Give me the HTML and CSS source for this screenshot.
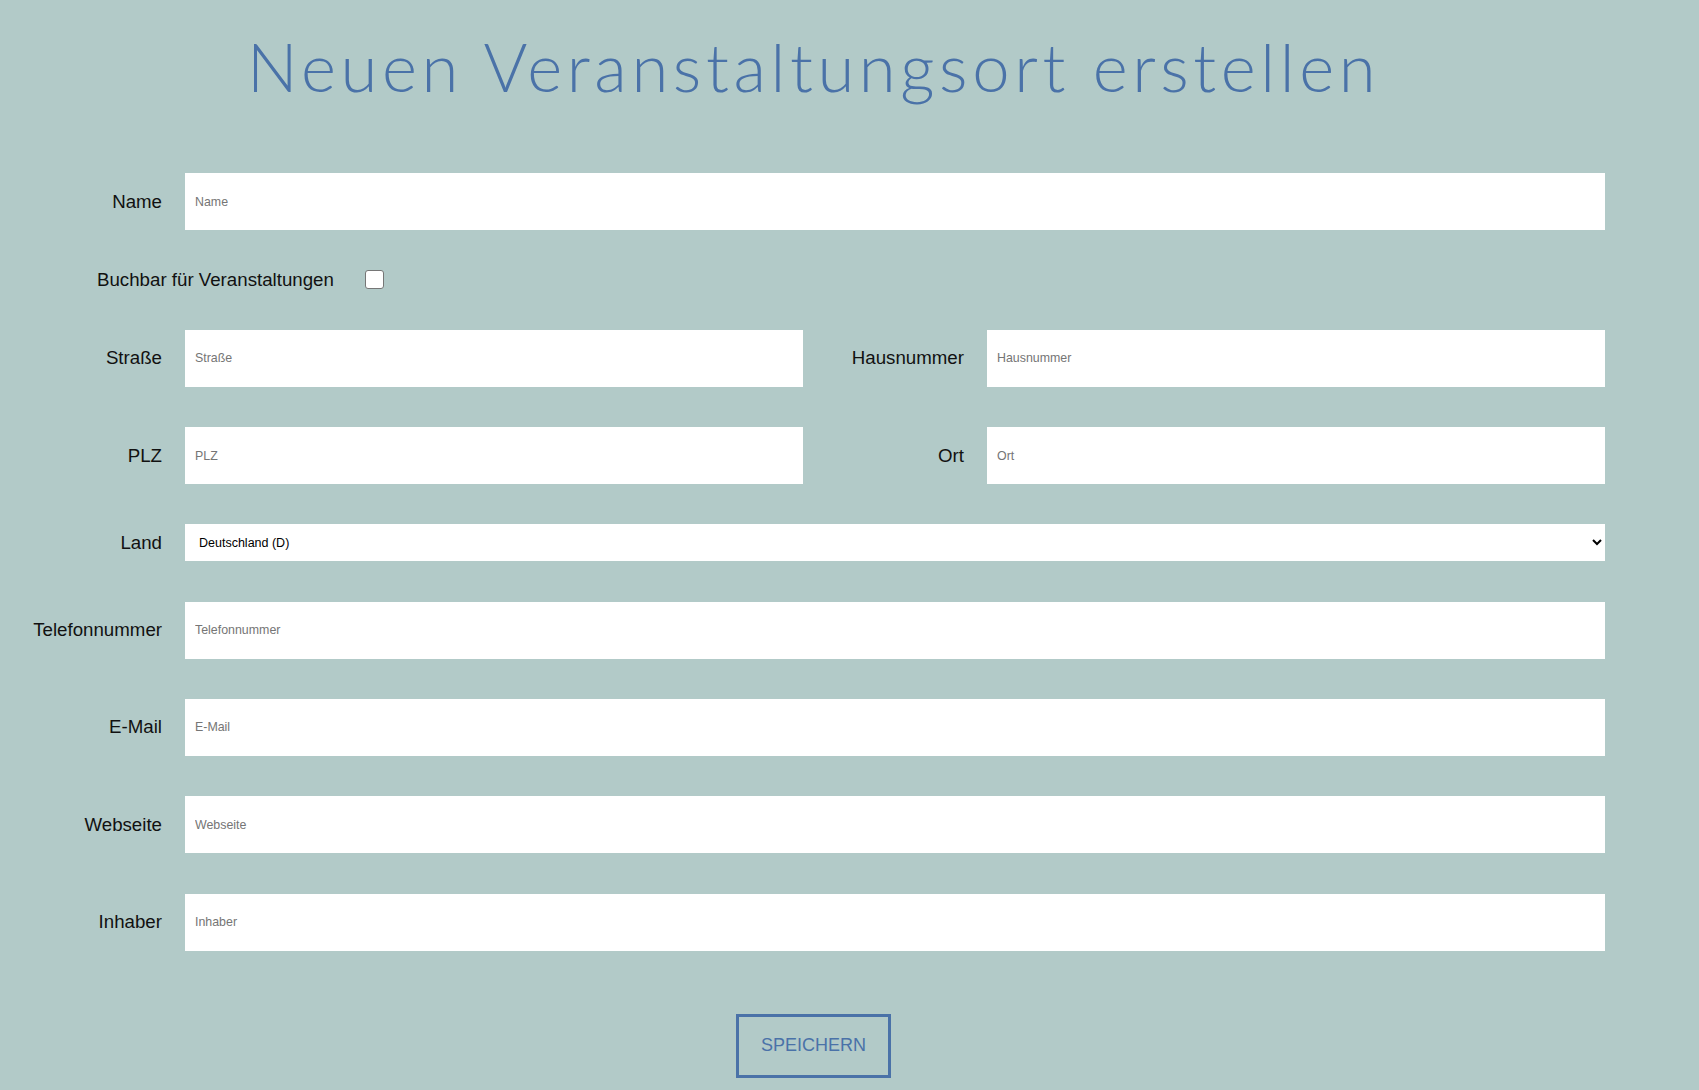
FILE: index.html
```html
<!DOCTYPE html>
<html lang="de">
<head>
<meta charset="utf-8">
<title>Neuen Veranstaltungsort erstellen</title>
<link rel="stylesheet" href="styles.css">
</head>
<body>
<div class="page">
  <h1 class="title">Neuen Veranstaltungsort erstellen</h1>
  <form class="form">
    <div class="row">
      <label class="label" for="name">Name</label>
      <input class="field full" id="name" type="text" placeholder="Name">
    </div>
    <div class="check-row">
      <label class="check-label" for="buchbar">Buchbar für Veranstaltungen</label>
      <input class="check" id="buchbar" type="checkbox">
    </div>
    <div class="row">
      <label class="label" for="strasse">Straße</label>
      <input class="field" id="strasse" type="text" placeholder="Straße">
      <label class="label" for="hausnummer">Hausnummer</label>
      <input class="field" id="hausnummer" type="text" placeholder="Hausnummer">
    </div>
    <div class="row">
      <label class="label" for="plz">PLZ</label>
      <input class="field" id="plz" type="text" placeholder="PLZ">
      <label class="label" for="ort">Ort</label>
      <input class="field" id="ort" type="text" placeholder="Ort">
    </div>
    <div class="row">
      <label class="label" for="land">Land</label>
      <select class="select full" id="land">
        <option>Deutschland (D)</option>
      </select>
    </div>
    <div class="row">
      <label class="label" for="tel">Telefonnummer</label>
      <input class="field full" id="tel" type="text" placeholder="Telefonnummer">
    </div>
    <div class="row">
      <label class="label" for="email">E-Mail</label>
      <input class="field full" id="email" type="text" placeholder="E-Mail">
    </div>
    <div class="row">
      <label class="label" for="web">Webseite</label>
      <input class="field full" id="web" type="text" placeholder="Webseite">
    </div>
    <div class="row">
      <label class="label" for="inhaber">Inhaber</label>
      <input class="field full" id="inhaber" type="text" placeholder="Inhaber">
    </div>
    <div class="actions">
      <button class="save" type="button">SPEICHERN</button>
    </div>
  </form>
</div>
</body>
</html>
```

FILE: styles.css
```css
html, body {
  margin: 0;
  padding: 0;
  background: #b2cac8;
}

body {
  font-family: "Liberation Sans", Arial, sans-serif;
  height: 1090px;
  overflow: hidden;
}

.page {
  width: 1583px;
  padding-left: 22px;
}

.title {
  margin: 0;
  padding-top: 26px;
  height: 173px;
  box-sizing: border-box;
  text-align: center;
  font-family: Lato, "Open Sans", sans-serif;
  font-weight: 300;
  font-size: 67px;
  line-height: 80px;
  color: #4a72a8;
  letter-spacing: 4.6px;
}

.form {
  display: block;
}

.row {
  display: grid;
  grid-template-columns: 140px 618px 138px 618px;
  column-gap: 23px;
  align-items: center;
  margin-bottom: 40.3px;
}

.label {
  text-align: right;
  font-size: 18.7px;
  color: #111;
  white-space: nowrap;
}

.field {
  height: 57px;
  box-sizing: border-box;
  border: none;
  outline: none;
  background: #fff;
  padding: 0 10px;
  font-family: "Liberation Sans", Arial, sans-serif;
  font-size: 12.4px;
  color: #222;
  margin: 0;
}

.field::placeholder {
  color: #757575;
}

.full {
  grid-column: 2 / 5;
}

.select {
  height: 37px;
  box-sizing: border-box;
  border: none;
  outline: none;
  background: #fff;
  padding: 0 10px;
  font-family: "Liberation Sans", Arial, sans-serif;
  font-size: 12.5px;
  color: #000;
  margin: 0;
}

.check-row {
  display: flex;
  align-items: center;
  gap: 31px;
  padding-left: 75px;
  margin-bottom: 40.5px;
  height: 19px;
}

.check-label {
  font-size: 18.7px;
  color: #111;
}

.check {
  appearance: none;
  -webkit-appearance: none;
  width: 19px;
  height: 19px;
  margin: 0;
  box-sizing: border-box;
  border: 1px solid #767676;
  border-radius: 3px;
  background: #fff;
}

.actions {
  display: flex;
  justify-content: center;
  padding-top: 23px;
}

.save {
  width: 155px;
  height: 64px;
  box-sizing: border-box;
  border: 3px solid #4a72a8;
  background: transparent;
  color: #4a72a8;
  font-family: "Liberation Sans", Arial, sans-serif;
  font-size: 18px;
  padding: 0;
  margin: 0;
}
```
